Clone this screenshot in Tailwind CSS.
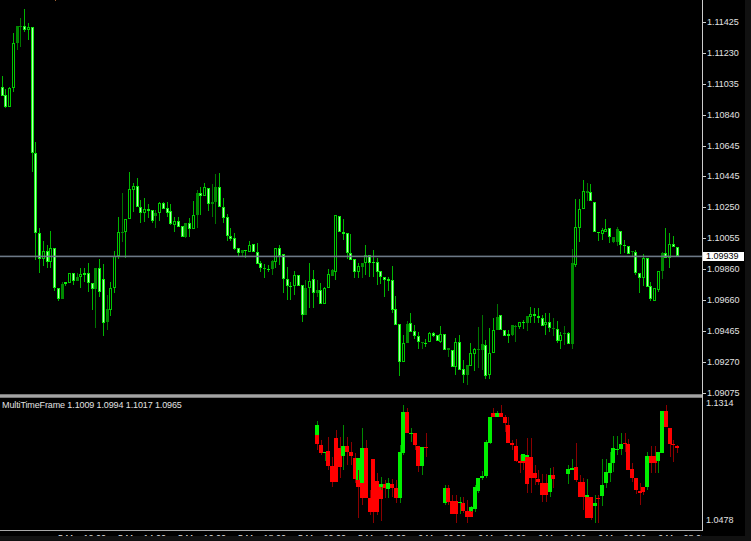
<!DOCTYPE html>
<html lang="en">
<head>
    <meta charset="UTF-8">
    <meta name="viewport" content="width=device-width, initial-scale=1.0">
    <script src="https://cdn.jsdelivr.net/npm/@tailwindcss/browser@4"></script>
    <title>EURUSD chart</title>
</head>
<body class="bg-black overflow-hidden">
    <div class="w-[751px] h-[541px] flex flex-col bg-[#111111] font-['Liberation_Sans',sans-serif] text-[9px] leading-[10px] text-[#e2e2e2]">
        <div class="flex h-[536px]">
            <!-- chart panes -->
            <div class="w-[702px] flex flex-col bg-black">
                <svg id="main" class="block w-[702px] h-[394px]" viewBox="0 0 702 394"></svg>
                <div class="h-[4px] bg-[#a3a3a3] border-y border-[#777777]"></div>
                <div class="relative h-[131.5px]">
                    <svg id="sub" class="block w-[702px] h-[131.5px]" viewBox="0 398 702 131.5"></svg>
                    <div class="absolute left-[2px] top-[2px] whitespace-nowrap tracking-[-0.12px]">MultiTimeFrame 1.1009 1.0994 1.1017 1.0965</div>
                </div>
                <div class="h-[6.5px] bg-black border-t border-[#a8a8a8] flex overflow-hidden">
                    <div class="w-[58px] pt-[4px] whitespace-nowrap">5 Mar 2020</div>
                    <div class="w-[60px] flex flex-col whitespace-nowrap"><div class="w-px h-[2px] bg-[#d8d8d8]"></div><div class="mt-[2px]">5 Mar 12:00</div></div>
                    <div class="w-[60px] flex flex-col whitespace-nowrap"><div class="w-px h-[2px] bg-[#d8d8d8]"></div><div class="mt-[2px]">5 Mar 14:00</div></div>
                    <div class="w-[60px] flex flex-col whitespace-nowrap"><div class="w-px h-[2px] bg-[#d8d8d8]"></div><div class="mt-[2px]">5 Mar 16:00</div></div>
                    <div class="w-[60px] flex flex-col whitespace-nowrap"><div class="w-px h-[2px] bg-[#d8d8d8]"></div><div class="mt-[2px]">5 Mar 18:00</div></div>
                    <div class="w-[60px] flex flex-col whitespace-nowrap"><div class="w-px h-[2px] bg-[#d8d8d8]"></div><div class="mt-[2px]">5 Mar 20:00</div></div>
                    <div class="w-[60px] flex flex-col whitespace-nowrap"><div class="w-px h-[2px] bg-[#d8d8d8]"></div><div class="mt-[2px]">5 Mar 22:00</div></div>
                    <div class="w-[60px] flex flex-col whitespace-nowrap"><div class="w-px h-[2px] bg-[#d8d8d8]"></div><div class="mt-[2px]">6 Mar 00:00</div></div>
                    <div class="w-[60px] flex flex-col whitespace-nowrap"><div class="w-px h-[2px] bg-[#d8d8d8]"></div><div class="mt-[2px]">6 Mar 02:00</div></div>
                    <div class="w-[60px] flex flex-col whitespace-nowrap"><div class="w-px h-[2px] bg-[#d8d8d8]"></div><div class="mt-[2px]">6 Mar 04:00</div></div>
                    <div class="w-[60px] flex flex-col whitespace-nowrap"><div class="w-px h-[2px] bg-[#d8d8d8]"></div><div class="mt-[2px]">6 Mar 06:00</div></div>
                    <div class="w-[44px] flex flex-col whitespace-nowrap"><div class="w-px h-[2px] bg-[#d8d8d8]"></div><div class="mt-[2px]">6 Mar 08:00</div></div>
                </div>
            </div>
            <!-- price axis -->
            <div class="relative w-[43px] h-[536px] bg-black">
                <div class="h-[530.5px] border-l border-[#cccccc] flex flex-col pt-[17px]">
                    <div class="h-[30.9px] flex items-start"><div class="w-[3px] h-px mt-[5px] bg-[#cccccc]"></div><div class="ml-[1px]">1.11425</div></div>
                    <div class="h-[30.9px] flex items-start"><div class="w-[3px] h-px mt-[5px] bg-[#cccccc]"></div><div class="ml-[1px]">1.11230</div></div>
                    <div class="h-[30.9px] flex items-start"><div class="w-[3px] h-px mt-[5px] bg-[#cccccc]"></div><div class="ml-[1px]">1.11035</div></div>
                    <div class="h-[30.9px] flex items-start"><div class="w-[3px] h-px mt-[5px] bg-[#cccccc]"></div><div class="ml-[1px]">1.10840</div></div>
                    <div class="h-[30.9px] flex items-start"><div class="w-[3px] h-px mt-[5px] bg-[#cccccc]"></div><div class="ml-[1px]">1.10645</div></div>
                    <div class="h-[30.9px] flex items-start"><div class="w-[3px] h-px mt-[5px] bg-[#cccccc]"></div><div class="ml-[1px]">1.10445</div></div>
                    <div class="h-[30.9px] flex items-start"><div class="w-[3px] h-px mt-[5px] bg-[#cccccc]"></div><div class="ml-[1px]">1.10250</div></div>
                    <div class="h-[30.9px] flex items-start"><div class="w-[3px] h-px mt-[5px] bg-[#cccccc]"></div><div class="ml-[1px]">1.10055</div></div>
                    <div class="h-[30.9px] flex items-start"><div class="w-[3px] h-px mt-[5px] bg-[#cccccc]"></div><div class="ml-[1px]">1.09860</div></div>
                    <div class="h-[30.9px] flex items-start"><div class="w-[3px] h-px mt-[5px] bg-[#cccccc]"></div><div class="ml-[1px]">1.09660</div></div>
                    <div class="h-[30.9px] flex items-start"><div class="w-[3px] h-px mt-[5px] bg-[#cccccc]"></div><div class="ml-[1px]">1.09465</div></div>
                    <div class="h-[30.9px] flex items-start"><div class="w-[3px] h-px mt-[5px] bg-[#cccccc]"></div><div class="ml-[1px]">1.09270</div></div>
                    <div class="h-[10px] flex items-start"><div class="w-[3px] h-px mt-[5px] bg-[#cccccc]"></div><div class="ml-[1px]">1.09075</div></div>
                    <div class="h-[10px] pl-[3px]">1.1314</div>
                    <div class="mt-auto mb-[6px] pl-[3px]">1.0478</div>
                </div>
                <div class="absolute left-[1px] top-[252px] w-[41px] h-[9px] bg-white text-black leading-[9px] pl-[3px]">1.09939</div>
            </div>
            <div class="flex-1"></div>
        </div>
        <div class="h-[5px]"></div>
    </div>

    <script>
        // i = candle slot, 60px every 16 candles. [high, low, top, bottom, type]
        // w = pale filled, h = hollow, d = dark
        const mainCandles = [
            [76,96,87,96,'w'],[89,108,95,107,'w'],[87,107,88,107,'h'],[33,92,43,88,'h'],[26,50,26,43,'d'],[18,47,26,27,'d'],[9,32,26,30,'w'],[23,40,27,30,'h'],[27,172,27,153,'w'],[142,260,153,233,'w'],
            [228,273,233,259,'w'],[241,266,251,259,'h'],[245,268,251,262,'w'],[231,268,248,262,'h'],[248,291,248,288,'w'],[288,301,288,299,'w'],[282,299,284,299,'d'],[282,286,282,284,'w'],[273,283,273,283,'h'],[273,285,273,281,'w'],
            [273,281,277,281,'d'],[268,288,274,277,'h'],[268,282,273,275,'w'],[263,292,273,283,'w'],[283,310,283,289,'w'],[268,328,268,289,'d'],[259,297,268,292,'w'],[264,336,279,323,'w'],[295,330,309,322,'d'],[282,316,288,310,'h'],
            [251,293,256,288,'h'],[217,259,232,256,'h'],[193,242,232,233,'d'],[219,258,219,232,'h'],[172,219,189,219,'h'],[183,212,186,190,'h'],[178,207,186,207,'w'],[200,223,207,213,'w'],[198,222,209,213,'h'],[204,218,209,211,'w'],
            [210,223,210,221,'w'],[210,228,213,216,'d'],[202,221,203,213,'h'],[202,209,203,209,'w'],[202,217,208,213,'w'],[204,225,211,224,'w'],[217,232,221,225,'h'],[217,227,221,227,'w'],[226,237,226,237,'w'],[223,238,223,237,'d'],
            [218,237,223,229,'w'],[201,229,215,229,'h'],[190,228,193,215,'d'],[187,215,193,196,'w'],[183,196,187,196,'h'],[188,211,188,204,'w'],[184,217,202,204,'d'],[174,224,187,202,'d'],[173,207,187,207,'w'],[198,223,207,218,'w'],
            [214,241,217,236,'w'],[228,241,236,239,'w'],[233,250,238,249,'w'],[248,257,248,253,'w'],[250,257,250,253,'d'],[250,258,250,251,'w'],[241,252,245,252,'h'],[244,252,244,252,'w'],[243,264,252,264,'w'],[261,272,263,268,'w'],
            [264,278,268,269,'h'],[265,272,269,270,'w'],[260,275,261,269,'d'],[248,268,248,262,'h'],[245,265,248,256,'w'],[254,293,254,279,'w'],[267,300,279,286,'w'],[282,300,286,287,'w'],[271,295,275,286,'h'],[275,286,275,286,'w'],
            [285,322,285,315,'w'],[280,315,288,315,'d'],[263,308,281,288,'h'],[270,308,279,293,'w'],[280,297,290,293,'d'],[283,304,290,304,'w'],[287,304,288,304,'h'],[269,288,274,288,'h'],[269,276,270,276,'d'],[215,280,215,272,'h'],
            [216,232,216,232,'w'],[219,240,232,234,'w'],[233,259,233,253,'w'],[234,260,253,260,'w'],[259,278,259,272,'w'],[263,278,266,272,'h'],[263,278,263,267,'d'],[245,275,255,263,'h'],[255,277,255,263,'w'],[250,277,262,263,'w'],
            [258,285,262,272,'w'],[271,284,271,277,'w'],[277,297,277,280,'w'],[277,291,279,281,'w'],[266,313,280,310,'w'],[296,325,309,325,'w'],[324,376,324,362,'w'],[335,362,343,362,'h'],[321,343,324,343,'d'],[313,332,323,332,'w'],
            [325,339,331,336,'w'],[332,349,336,342,'w'],[342,349,342,343,'d'],[339,347,343,344,'w'],[332,342,333,342,'h'],[332,337,333,336,'w'],[335,341,335,341,'w'],[326,343,334,342,'h'],[334,350,334,350,'w'],[348,357,348,350,'d'],
            [350,367,350,367,'w'],[338,375,342,367,'h'],[335,370,342,370,'w'],[360,383,369,375,'w'],[365,385,365,375,'d'],[343,366,353,366,'h'],[348,371,349,354,'h'],[327,368,349,350,'d'],[315,370,344,350,'d'],[340,379,345,376,'w'],
            [328,379,353,375,'h'],[318,353,330,353,'h'],[304,330,317,330,'d'],[315,330,315,330,'w'],[330,336,330,336,'w'],[330,343,334,336,'w'],[325,336,325,335,'d'],[325,342,326,327,'d'],[322,329,322,327,'h'],[320,329,322,323,'w'],
            [316,331,316,323,'d'],[307,323,314,317,'h'],[308,323,314,316,'w'],[308,323,316,318,'w'],[315,326,318,326,'w'],[313,335,322,325,'h'],[313,332,322,328,'w'],[318,336,328,329,'d'],[321,343,329,341,'w'],[332,349,335,341,'h'],
            [326,345,333,334,'d'],[332,344,333,344,'w'],[249,349,263,344,'d'],[199,267,227,265,'h'],[199,242,209,228,'h'],[180,209,191,209,'h'],[183,201,191,193,'d'],[184,201,192,201,'w'],[202,232,202,232,'w'],[232,241,232,233,'w'],
            [228,240,230,234,'h'],[219,232,229,232,'h'],[228,243,228,237,'w'],[237,243,237,242,'d'],[227,246,229,242,'d'],[231,254,231,245,'w'],[240,253,245,246,'w'],[246,254,246,254,'w'],[251,257,251,252,'d'],[250,275,252,273,'w'],
            [273,293,273,278,'w'],[254,286,258,278,'h'],[258,287,258,287,'w'],[282,301,286,299,'w'],[288,301,288,301,'h'],[271,292,271,290,'h'],[252,279,253,271,'d'],[228,258,253,258,'w'],[233,268,244,258,'h'],[236,247,244,247,'w'],
            [247,256,247,256,'w']
        ];

        // [i, high, low, top, bottom, colour]
        const subCandles = [
            [84,421,435,425,435,'g'],[84,435,450,435,444,'r'],[85,440,455,445,453,'r'],[86,452,461,452,453,'g'],[87,437,470,451,466,'r'],[88,457,487,466,482,'r'],[89,430,482,438,482,'r'],[90,437,478,448,467,'r'],[91,425,470,446,456,'g'],[92,437,465,446,452,'r'],
            [93,442,465,452,456,'r'],[94,453,483,458,479,'r'],[95,458,518,458,487,'g'],[95,470,518,480,487,'r'],[96,428,483,448,483,'g'],[96,483,505,483,498,'r'],[97,440,498,448,498,'r'],[98,490,515,498,512,'r'],[99,459,523,459,512,'r'],[100,473,515,481,512,'r'],
            [101,477,521,485,499,'r'],[101,477,490,484,487,'g'],[102,480,498,484,488,'r'],[103,478,498,483,489,'g'],[104,479,497,484,488,'r'],[105,480,503,488,498,'r'],[106,445,503,452,498,'g'],[107,405,455,412,453,'g'],[108,408,433,412,433,'r'],[109,428,442,433,434,'g'],
            [110,433,450,433,445,'r'],[111,446,472,446,466,'r'],[112,447,475,447,466,'g'],[113,433,457,447,448,'r'],[118,485,505,488,503,'g'],[119,485,505,488,502,'r'],[120,495,514,501,514,'r'],[121,495,523,501,514,'r'],[122,497,514,502,503,'g'],[123,497,513,503,511,'r'],
            [124,500,523,511,517,'r'],[125,507,517,511,517,'r'],[125,506,512,507,511,'g'],[126,485,512,487,509,'g'],[127,478,493,478,491,'g'],[128,471,480,476,478,'g'],[129,440,478,442,476,'g'],[130,417,444,417,443,'g'],[131,408,417,413,417,'r'],[132,411,417,413,417,'g'],
            [133,405,417,413,417,'r'],[134,415,432,417,423,'r'],[135,417,443,425,443,'r'],[136,440,450,443,445,'r'],[137,439,462,446,461,'r'],[138,455,473,461,463,'r'],[139,454,470,454,461,'g'],[139,461,470,461,463,'r'],[140,438,493,457,484,'r'],[140,455,457,455,457,'g'],
            [141,438,493,457,478,'r'],[142,465,485,473,478,'r'],[143,470,485,479,482,'r'],[144,474,502,483,495,'r'],[145,474,502,483,495,'r'],[146,468,497,475,492,'g'],[147,467,488,475,479,'r'],[151,465,484,469,474,'g'],[152,459,470,468,470,'g'],[153,443,482,467,480,'r'],
            [154,475,497,482,497,'r'],[155,478,510,482,497,'r'],[156,479,518,497,518,'r'],[156,479,497,495,497,'g'],[157,497,520,497,518,'r'],[158,495,523,503,506,'g'],[159,495,523,498,499,'r'],[160,459,506,485,496,'g'],[161,459,488,472,483,'g'],[162,452,482,463,473,'g'],
            [163,436,472,448,463,'g'],[164,436,455,449,450,'g'],[165,433,455,444,449,'g'],[166,433,452,443,444,'r'],[167,439,470,444,470,'r'],[168,463,482,469,478,'r'],[169,478,494,478,490,'r'],[170,483,505,491,493,'r'],[171,487,495,487,492,'r'],[172,452,490,456,487,'g'],
            [173,446,473,456,463,'r'],[174,446,473,456,463,'r'],[175,452,473,452,461,'g'],[176,411,453,411,453,'g'],[177,405,427,411,427,'r'],[178,428,457,428,444,'r'],[179,440,462,444,445,'r'],[180,445,453,446,448,'r']
        ];

        const slot = i => 2 + 3.75 * i;

        function rect(svg, x, y, w, h, fill) {
            const r = document.createElementNS("http://www.w3.org/2000/svg", "rect");
            r.setAttribute("x", x);
            r.setAttribute("y", y);
            r.setAttribute("width", w);
            r.setAttribute("height", h);
            r.setAttribute("fill", fill);
            svg.appendChild(r);
        }

        const main = document.getElementById("main");
        rect(main, 55, 0, 1, 1, "#a06030");
        mainCandles.forEach((c, i) => {
            const [high, low, top, bottom, type] = c;
            const x = Math.round(slot(i) - 1.5);
            const height = Math.max(bottom - top, 1);
            rect(main, x + 1, high, 1, low - high, type === "d" ? "#007400" : "#00b400");
            if (type === "d") {
                rect(main, x, top, 3, height, "#008a00");
                return;
            }
            rect(main, x, top, 3, height, type === "w" ? "#0cf00c" : "#00c800");
            if (height > 2) {
                rect(main, x + 1, top + 1, 1, height - 2, type === "w" ? "#b8ffb8" : "#000000");
            }
        });
        rect(main, 0, 255.6, 702, 1.6, "#6c7886");

        const sub = document.getElementById("sub");
        subCandles.forEach(c => {
            const [i, high, low, top, bottom, colour] = c;
            const x = Math.round(slot(i) - 2);
            rect(sub, x + 2, high, 1, low - high, colour === "r" ? "#8a0000" : "#008a00");
            rect(sub, x, top, 4, Math.max(bottom - top, 1), colour === "r" ? "#ff0000" : "#00f000");
        });
    </script>
</body>
</html>
